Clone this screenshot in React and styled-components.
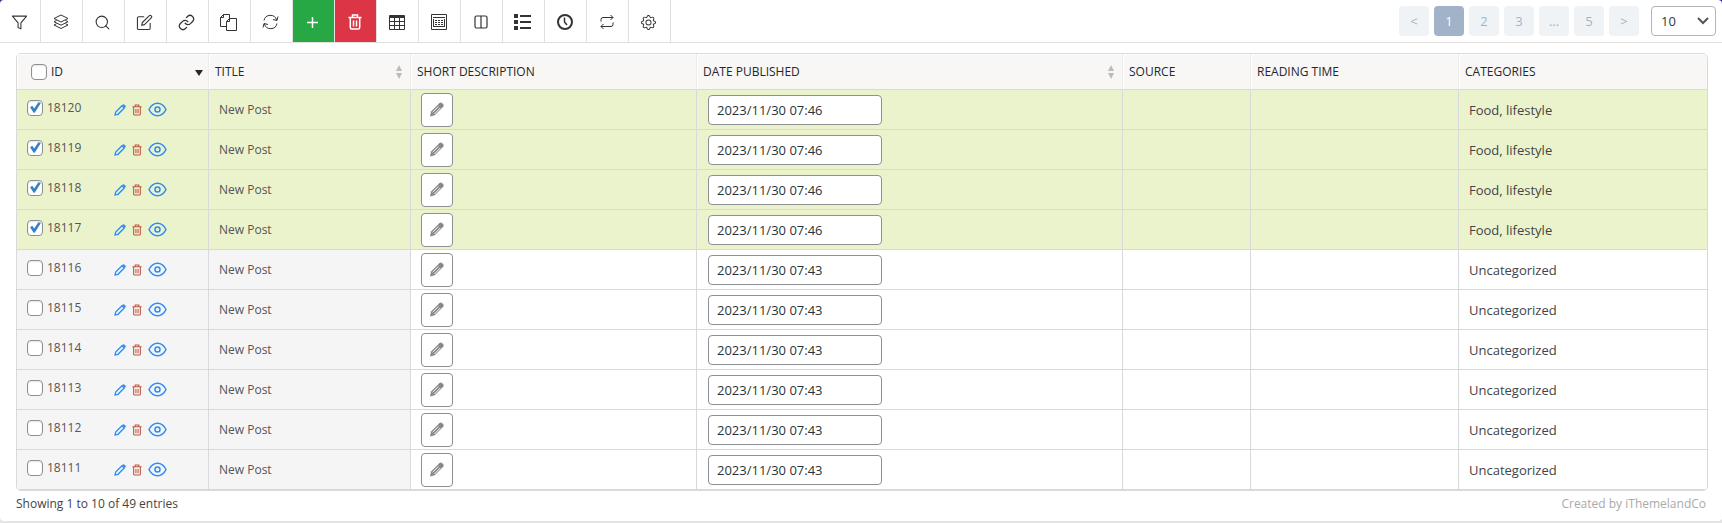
import React, { useState } from "react";
import styled, { createGlobalStyle, css } from "styled-components";
import { FiFilter, FiSearch, FiEdit, FiLink } from "react-icons/fi";
import { BsGear } from "react-icons/bs";

const GlobalStyle = createGlobalStyle`
  * {
    box-sizing: border-box;
  }

  body {
    margin: 0;
    background: #e4e4e4 linear-gradient(#3a2a9c, #3a2a9c) 0 0 / 100% 8px no-repeat;
    font-family: "Open Sans", "Noto Sans", sans-serif;
    font-size: 12px;
    color: #444;
  }

  button,
  input,
  select {
    font-family: inherit;
    margin: 0;
  }
`;

const Panel = styled.main`
  min-height: calc(100vh - 2px);
  background: #fff;
  border-radius: 4px;
`;

const TopBar = styled.header`
  display: flex;
  justify-content: space-between;
  height: 43px;
  border-bottom: 1px solid #e0e0e0;
`;

const Tools = styled.div`
  display: flex;
`;

const toolColors = { add: "#28a745", remove: "#dc3545" };

const ToolButton = styled.button`
  display: flex;
  align-items: center;
  justify-content: center;
  width: 42px;
  height: 42px;
  padding: 2px 2px 0 0;
  border: 0;
  border-right: 1px solid #e0e0e0;
  background: ${({ $kind }) => toolColors[$kind] || "transparent"};
  color: ${({ $kind }) => ($kind ? "#fff" : "#333")};
  cursor: pointer;

  &:first-child {
    width: 41px;
  }
`;

const Pager = styled.nav`
  display: flex;
  align-items: center;
  gap: 5px;
  padding-right: 6px;
`;

const PageButton = styled.button`
  width: 30px;
  height: 30px;
  padding: 0;
  border: 0;
  border-radius: 4px;
  font-size: 13px;
  background: ${({ $active }) => ($active ? "#a2b3c9" : "#f0f3f6")};
  color: ${({ $active }) => ($active ? "#fff" : "#a2b3c9")};
  cursor: pointer;
`;

const PerPage = styled.div`
  display: grid;
  align-items: center;
  margin-left: 7px;

  select,
  svg {
    grid-area: 1 / 1;
  }

  svg {
    justify-self: end;
    margin-right: 7px;
    pointer-events: none;
  }
`;

const Select = styled.select`
  appearance: none;
  width: 65px;
  height: 30px;
  padding: 0 24px 0 9px;
  border: 1px solid #b4b4b4;
  border-radius: 4px;
  background: #fff;
  color: #32373c;
  font-size: 13px;
`;

const TableFrame = styled.div`
  margin: 10px 14px 0 16px;
  border: 1px solid #d9d9dc;
  border-radius: 5px;
  overflow: hidden;
`;

const Table = styled.table`
  width: 100%;
  table-layout: fixed;
  border-collapse: separate;
  border-spacing: 0;
`;

const HeadCell = styled.th`
  width: ${({ $width }) => $width};
  height: 36px;
  padding: 0 8px 0 6px;
  background: #f8f7f5;
  border-right: 1px solid #ededed;
  border-bottom: 1px solid #d9d9dc;
  box-shadow: inset 1px 1px #fff;
  color: #23282d;
  font-weight: 400;
  text-align: left;
  text-transform: uppercase;

  &:first-child {
    padding-left: 14px;
    padding-right: 5px;
  }

  &:last-child {
    border-right: 0;
  }
`;

const HeadInner = styled.div`
  display: flex;
  align-items: center;
  gap: 4px;

  svg {
    margin-left: auto;
  }
`;

const Row = styled.tr`
  --pinned: #f5f5f5;

  ${({ $selected }) =>
    $selected &&
    css`
      --pinned: #ebf3cd;
      background: #ebf3cd;
    `}
`;

const Cell = styled.td`
  height: 40px;
  padding: 0 10px;
  border-right: 1px solid #d9d9dc;
  border-bottom: 1px solid #d9d9dc;
  background: ${({ $pinned }) => ($pinned ? "var(--pinned)" : "transparent")};
  color: ${({ $pinned }) => ($pinned ? "#555" : "#444")};
  font-size: ${({ $large }) => ($large ? "13px" : "12px")};

  &:last-child {
    border-right: 0;
  }
`;

const IdCell = styled.div`
  display: flex;
  align-items: center;
`;

const IdLabel = styled.label`
  display: flex;
  align-items: center;
  gap: 4px;
  width: 87px;
  padding-bottom: 4px;
`;

const Checkbox = styled.input`
  appearance: none;
  flex: none;
  width: 16px;
  height: 16px;
  border: 1px solid #8c8f94;
  border-radius: 4px;
  background: #fff;
  box-shadow: inset 0 1px 2px rgba(0, 0, 0, 0.1);
  cursor: pointer;

  &:checked::before {
    content: "";
    display: block;
    width: 14px;
    height: 14px;
    background: #3582c4;
    clip-path: polygon(15% 48%, 30% 38%, 44% 58%, 74% 12%, 92% 18%, 48% 88%, 40% 88%);
  }
`;

const IconButton = styled.button`
  display: flex;
  padding: 0;
  margin-right: 6px;
  border: 0;
  background: none;
  color: ${({ $color }) => $color};
  cursor: pointer;
`;

const EditButton = styled.button`
  display: flex;
  align-items: center;
  justify-content: center;
  width: 32px;
  height: 34px;
  padding: 0;
  border: 1px solid #8c8f94;
  border-radius: 4px;
  background: #fff;
  color: #888;
  cursor: pointer;
`;

const DateInput = styled.input`
  display: block;
  width: 174px;
  height: 30px;
  margin-top: 1px;
  margin-left: 1px;
  padding: 0 8px;
  border: 1px solid #8c8f94;
  border-radius: 4px;
  background: #fff;
  color: #2c3338;
  font-size: 13px;
`;

const Footer = styled.footer`
  display: flex;
  justify-content: space-between;
  padding: 4px 16px 0;
  line-height: 17px;
`;

const Credit = styled.span`
  color: #aaa;
`;

const LayersIcon = () => (
  <svg width="16" height="16" viewBox="0 0 16 16" fill="none" stroke="currentColor">
    <path d="M8 1l7 3.500-7 3.500-7-3.500z" />
    <path d="M3.500 6.500 1 7.700l7 3.500 7-3.500-2.500-1.200M3.500 9.700 1 11l7 3.500 7-3.500-2.500-1.300" />
  </svg>
);

const CopyIcon = () => (
  <svg width="17" height="17" viewBox="0 0 17 17" fill="none" stroke="currentColor">
    <path d="M6.500 12.500h-6v-9l3-3h6v4M.5 3.500h3v-3M6.500 16.500h10v-12h-7l-3 3zM6.500 7.500h3v-3" />
  </svg>
);

const RefreshIcon = () => (
  <svg width="17" height="16" viewBox="0 0 17 16" fill="none" stroke="currentColor">
    <path d="M2 6.500A6.500 6.500 0 0 1 14.600 6M15 9.500A6.500 6.500 0 0 1 2.400 10" />
    <path d="M16 2.500 15 6.500 11 5.500M1 13.500 2 9.500 6 10.500" />
  </svg>
);

const PlusIcon = () => (
  <svg width="11" height="11" viewBox="0 0 11 11" fill="none" stroke="currentColor" strokeWidth="1.500">
    <path d="M5.500 0v11M0 5.500h11" />
  </svg>
);

const TrashIcon = ({ width = 14, height = 16, strokeWidth = 1.5 }) => (
  <svg width={width} height={height} viewBox="0 0 14 16" fill="none" stroke="currentColor" strokeWidth={strokeWidth}>
    <path d="M.5 3.500h13M4.500 3V1h5v2M2.300 4v9.500q0 1.500 1.500 1.500h6.400q1.500 0 1.500-1.500V4M5.500 6.500v6M8.500 6.500v6" />
  </svg>
);

const TableIcon = () => (
  <svg width="16" height="15" viewBox="0 0 16 15" fill="none" stroke="currentColor">
    <path d="M.5.500h15v14H.5zM5.500 1v13M10.500 1v13M0 6.500h16M0 10.500h16" />
    <path d="M0 2h16" strokeWidth="2" />
  </svg>
);

const FormIcon = () => (
  <svg width="16" height="16" viewBox="0 0 16 16" fill="none" stroke="currentColor">
    <path d="M.5.500h15v15H.5zM2 3.500h12M2.500 5v8M13.500 5v8M2 12.500h12" />
    <path d="M4 6.500h8M4 8.500h8M4 10.500h8" strokeDasharray="2 1" />
  </svg>
);

const ColumnsIcon = () => (
  <svg width="14" height="14" viewBox="0 0 14 14" fill="none" stroke="currentColor" strokeWidth="1.200">
    <rect x="1" y="1" width="12" height="12" rx="1.500" />
    <path d="M7 1v12" />
  </svg>
);

const ListIcon = () => (
  <svg width="17" height="16" viewBox="0 0 17 16" fill="currentColor">
    <path d="M0 0h4v4H0zM0 6h4v4H0zM0 12h4v4H0zM6 1h11v2H6zM6 7h11v2H6zM6 13h11v2H6z" />
  </svg>
);

const ClockIcon = () => (
  <svg width="16" height="16" viewBox="0 0 16 16" fill="none" stroke="currentColor" strokeWidth="2">
    <circle cx="8" cy="8" r="7" />
    <path d="M7.500 3.500V8l2.500 3" strokeWidth="1.500" />
  </svg>
);

const RepeatIcon = () => (
  <svg width="14" height="16" viewBox="0 0 14 16" fill="none" stroke="currentColor">
    <path d="M1 7.500V5.500q0-2 2-2h10M10.500 1 13 3.500 10.500 6M13 8.500v2q0 2-2 2H1M3.500 10 1 12.500 3.500 15" />
  </svg>
);

const PencilIcon = () => (
  <svg width="12" height="12" viewBox="0 0 12 12" fill="none" stroke="currentColor" strokeWidth="1.300">
    <path d="M1 11l.7-3L8 1.700l2.300 2.300L4 10.300z" />
    <path d="M9.500 1.200l1.300 1.300" strokeWidth="2" strokeLinecap="round" />
  </svg>
);

const EyeIcon = () => (
  <svg width="19" height="15" viewBox="0 0 19 15" fill="none" stroke="currentColor" strokeWidth="1.500">
    <path d="M1 7.500C3 3.500 6 1.300 9.500 1.300s6.500 2.200 8.500 6.200c-2 4-5 6.200-8.500 6.200S3 11.500 1 7.500z" />
    <circle cx="9.500" cy="7.500" r="2.500" />
  </svg>
);

const WidePencilIcon = () => (
  <svg width="14" height="15" viewBox="0 0 14 15">
    <path d="M0 14.500 1 9.500 9.500 1q1.300-1 2.500 0l1.200 1.300q1 1.200 0 2.500L4.800 13.300z" fill="currentColor" />
    <path d="M2.600 10.200 8.500 4.300M4.400 12 10.300 6" stroke="#fff" fill="none" />
  </svg>
);

const SortIcon = () => (
  <svg width="6" height="14" viewBox="0 0 6 14" fill="#bbb">
    <path d="M3 0 6 6H0zM3 14 0 8h6z" />
  </svg>
);

const SortedIcon = () => (
  <svg width="8" height="10" viewBox="0 0 8 10" fill="#23282d">
    <path d="M0 3h8L4 9z" />
  </svg>
);

const ChevronIcon = () => (
  <svg width="12" height="8" viewBox="0 0 12 8" fill="none" stroke="#555" strokeWidth="2">
    <path d="M1 1l5 5 5-5" />
  </svg>
);

const tools = [
  { label: "Filter", icon: <FiFilter size={17} strokeWidth={1.5} /> },
  { label: "Layers", icon: <LayersIcon /> },
  { label: "Search", icon: <FiSearch size={17} strokeWidth={1.5} /> },
  { label: "Bulk edit", icon: <FiEdit size={17} strokeWidth={1.5} /> },
  { label: "Bind", icon: <FiLink size={17} strokeWidth={1.8} /> },
  { label: "Duplicate", icon: <CopyIcon /> },
  { label: "Reload", icon: <RefreshIcon /> },
  { label: "Add", icon: <PlusIcon />, kind: "add" },
  { label: "Delete", icon: <TrashIcon />, kind: "remove" },
  { label: "Table", icon: <TableIcon /> },
  { label: "Meta fields", icon: <FormIcon /> },
  { label: "Columns", icon: <ColumnsIcon /> },
  { label: "List", icon: <ListIcon /> },
  { label: "History", icon: <ClockIcon /> },
  { label: "Import and export", icon: <RepeatIcon /> },
  { label: "Settings", icon: <BsGear size={15} /> }
];

const columns = [
  { title: "Title", width: "202px", sort: true },
  { title: "Short description", width: "286px" },
  { title: "Date published", width: "426px", sort: true },
  { title: "Source", width: "128px" },
  { title: "Reading time", width: "208px" },
  { title: "Categories", width: "auto" }
];

const pages = ["<", "1", "2", "3", "...", "5", ">"];

const posts = [18120, 18119, 18118, 18117, 18116, 18115, 18114, 18113, 18112, 18111].map(
  (id, i) => ({
    id,
    date: i < 4 ? "2023/11/30 07:46" : "2023/11/30 07:43",
    categories: i < 4 ? "Food, lifestyle" : "Uncategorized"
  })
);

const PostRow = ({ post, selected, onToggle }) => (
  <Row $selected={selected}>
    <Cell $pinned>
      <IdCell>
        <IdLabel>
          <Checkbox type="checkbox" checked={selected} onChange={onToggle} />
          {post.id}
        </IdLabel>
        <IconButton $color="#2b8cf5" aria-label="Edit post">
          <PencilIcon />
        </IconButton>
        <IconButton $color="#c0563f" aria-label="Delete post">
          <TrashIcon width={10} height={12} />
        </IconButton>
        <IconButton $color="#2b8cf5" aria-label="View post">
          <EyeIcon />
        </IconButton>
      </IdCell>
    </Cell>
    <Cell $pinned>New Post</Cell>
    <Cell>
      <EditButton aria-label="Edit short description">
        <WidePencilIcon />
      </EditButton>
    </Cell>
    <Cell>
      <DateInput type="text" aria-label="Date published" defaultValue={post.date} />
    </Cell>
    <Cell />
    <Cell />
    <Cell $large>{post.categories}</Cell>
  </Row>
);

const App = () => {
  const [selected, setSelected] = useState([18120, 18119, 18118, 18117]);

  const toggle = id =>
    setSelected(ids => (ids.includes(id) ? ids.filter(x => x !== id) : [...ids, id]));

  const toggleAll = e => setSelected(e.target.checked ? posts.map(p => p.id) : []);

  return (
    <Panel>
      <GlobalStyle />
      <TopBar>
        <Tools>
          {tools.map(({ label, icon, kind }) => (
            <ToolButton key={label} aria-label={label} $kind={kind}>
              {icon}
            </ToolButton>
          ))}
        </Tools>
        <Pager>
          {pages.map(page => (
            <PageButton key={page} $active={page === "1"}>
              {page}
            </PageButton>
          ))}
          <PerPage>
            <Select aria-label="Items per page" defaultValue="10">
              <option>10</option>
              <option>25</option>
              <option>50</option>
            </Select>
            <ChevronIcon />
          </PerPage>
        </Pager>
      </TopBar>
      <TableFrame>
        <Table>
          <thead>
            <tr>
              <HeadCell $width="192px">
                <HeadInner>
                  <Checkbox
                    type="checkbox"
                    aria-label="Select all"
                    checked={selected.length === posts.length}
                    onChange={toggleAll}
                  />
                  ID
                  <SortedIcon />
                </HeadInner>
              </HeadCell>
              {columns.map(({ title, width, sort }) => (
                <HeadCell key={title} $width={width}>
                  <HeadInner>
                    {title}
                    {sort && <SortIcon />}
                  </HeadInner>
                </HeadCell>
              ))}
            </tr>
          </thead>
          <tbody>
            {posts.map(post => (
              <PostRow
                key={post.id}
                post={post}
                selected={selected.includes(post.id)}
                onToggle={() => toggle(post.id)}
              />
            ))}
          </tbody>
        </Table>
      </TableFrame>
      <Footer>
        <span>Showing 1 to 10 of 49 entries</span>
        <Credit>Created by iThemelandCo</Credit>
      </Footer>
    </Panel>
  );
};

export default App;
